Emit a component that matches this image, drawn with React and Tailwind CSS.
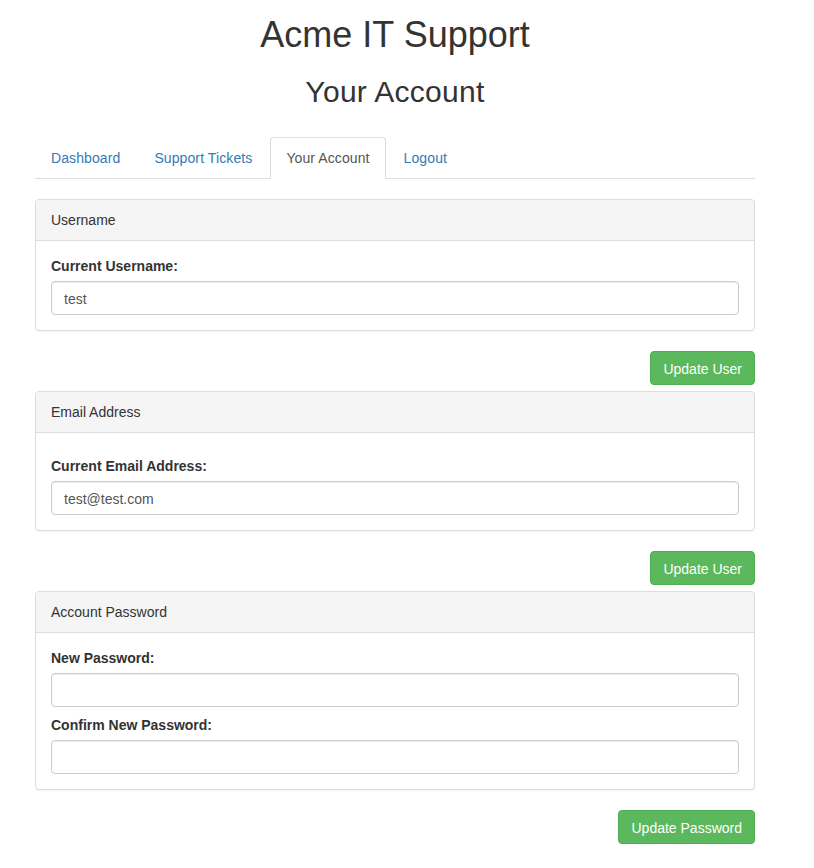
import React from "react";

const font = { fontFamily: '"Liberation Sans", Arial, Helvetica, sans-serif' };

function Panel({ title, children }) {
  return (
    <div className="rounded-[4px] border border-[#ddd] bg-white shadow-[0_1px_1px_rgba(0,0,0,0.05)]">
      <div className="rounded-t-[3px] border-b border-[#ddd] bg-[#f5f5f5] px-[15px] py-[10px] text-[14px] leading-[20px] text-[#333]">
        {title}
      </div>
      <div className="p-[15px]">{children}</div>
    </div>
  );
}

function Field({ label, value = "", type = "text", className = "" }) {
  return (
    <div className={className}>
      <label className="mb-[5px] block text-[14px] font-bold leading-[20px] text-[#333]">{label}</label>
      <input
        type={type}
        defaultValue={value}
        className="block h-[34px] w-full rounded-[4px] border border-[#ccc] bg-white px-[12px] pt-[7px] pb-[5px] text-[14px] leading-[20px] text-[#555] shadow-[inset_0_1px_1px_rgba(0,0,0,0.075)] outline-none"
      />
    </div>
  );
}

function SubmitButton({ children }) {
  return (
    <div className="flex justify-end">
      <button className="h-[34px] rounded-[4px] border border-[#4cae4c] bg-[#5cb85c] px-[12px] pt-[7px] pb-[5px] text-[14px] leading-[20px] text-white">
        {children}
      </button>
    </div>
  );
}

export default function App() {
  const tabs = ["Dashboard", "Support Tickets", "Your Account", "Logout"];

  return (
    <div className="min-h-screen bg-white pl-[35px] pt-[15px] text-[#333]" style={font}>
      <div className="w-[720px]">
        <h1 className="text-center text-[36px] leading-[39.6px]">Acme IT Support</h1>
        <h2 className="mt-[20px] text-center text-[30px] leading-[33px] tracking-[0.3px]">Your Account</h2>

        <ul className="mt-[29px] flex border-b border-[#ddd]">
          {tabs.map(t => {
            const active = t === "Your Account";
            return (
              <li key={t} className="-mb-px mr-[2px]">
                <a
                  href="#"
                  className={
                    active
                      ? "block rounded-t-[4px] border border-[#ddd] border-b-transparent bg-white px-[15px] py-[10px] text-[14px] leading-[20px] tracking-[0.1px] text-[#555]"
                      : "block rounded-t-[4px] border border-transparent px-[15px] py-[10px] text-[14px] leading-[20px] tracking-[0.1px] text-[#337ab7]"
                  }
                >
                  {t}
                </a>
              </li>
            );
          })}
        </ul>

        <div className="mt-[20px]">
          <Panel title="Username">
            <Field label="Current Username:" value="test" />
          </Panel>
        </div>
        <div className="mt-[20px]">
          <SubmitButton>Update User</SubmitButton>
        </div>

        <div className="mt-[6px]">
          <Panel title="Email Address">
            <Field label="Current Email Address:" value="test@test.com" className="mt-[8px]" />
          </Panel>
        </div>
        <div className="mt-[20px]">
          <SubmitButton>Update User</SubmitButton>
        </div>

        <div className="mt-[6px]">
          <Panel title="Account Password">
            <Field label="New Password:" type="password" />
            <Field label="Confirm New Password:" type="password" className="mt-[8px]" />
          </Panel>
        </div>
        <div className="mt-[20px] pb-[24px]">
          <SubmitButton>Update Password</SubmitButton>
        </div>
      </div>
    </div>
  );
}
